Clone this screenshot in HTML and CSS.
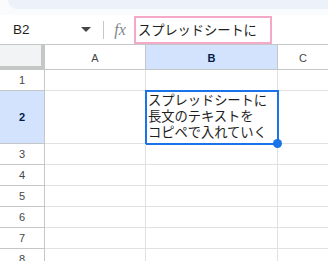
FILE: index.html
```html
<!DOCTYPE html>
<html lang="ja">
<head>
<meta charset="utf-8">
<link rel="stylesheet" href="styles.css">
</head>
<body>
<div class="top"><div class="toolbar"></div></div>
<div class="fbar">
  <div class="namebox">
    <span class="ref">B2</span>
    <svg class="caret" width="10" height="6" viewBox="0 0 10 6"><path d="M0 0 L10 0 L5 5 Z" fill="#444746"/></svg>
  </div>
  <div class="sep"></div>
  <div class="fx">fx</div>
  <div class="finput">スプレッドシートに</div>
</div>
<div class="grid">
  <div class="cell corner"></div>
  <div class="cell colh">A</div>
  <div class="cell colh sel">B</div>
  <div class="cell colh last">C</div>

  <div class="cell rowh">1</div><div class="cell"></div><div class="cell"></div><div class="cell last"></div>
  <div class="cell rowh sel">2</div><div class="cell"></div>
  <div class="cell active">
    <div class="text">スプレッドシートに<br>長文のテキストを<br>コピペで入れていく</div>
    <div class="selbox"></div>
  </div>
  <div class="cell last"></div>
  <div class="cell rowh">3</div><div class="cell"></div><div class="cell"><div class="handle"></div></div><div class="cell last"></div>
  <div class="cell rowh">4</div><div class="cell"></div><div class="cell"></div><div class="cell last"></div>
  <div class="cell rowh">5</div><div class="cell"></div><div class="cell"></div><div class="cell last"></div>
  <div class="cell rowh">6</div><div class="cell"></div><div class="cell"></div><div class="cell last"></div>
  <div class="cell rowh">7</div><div class="cell"></div><div class="cell"></div><div class="cell last"></div>
  <div class="cell rowh">8</div><div class="cell"></div><div class="cell"></div><div class="cell last"></div>
</div>
</body>
</html>
```
FILE: styles.css
```css
* { box-sizing: border-box; }
html, body { margin: 0; padding: 0; }
body {
  width: 328px;
  height: 261px;
  overflow: hidden;
  background: #ffffff;
  font-family: "Liberation Sans", Arial, "Noto Sans CJK JP", sans-serif;
}
.top {
  height: 15px;
  background: #f9fbfd;
  padding-left: 8px;
}
.toolbar {
  height: 9px;
  background: #edf2fa;
  border-bottom-left-radius: 14px;
}
.fbar {
  height: 29px;
  display: flex;
  align-items: center;
  background: #ffffff;
}
.namebox {
  width: 103px;
  display: flex;
  align-items: center;
  justify-content: space-between;
  padding: 0 12px 0 13px;
}
.ref {
  font-size: 13.5px;
  color: #1f1f1f;
}
.caret { margin-top: 1px; }
.sep {
  width: 1px;
  height: 18px;
  background: #c7c7c7;
}
.fx {
  width: 30px;
  text-align: center;
  font-family: "Liberation Serif", serif;
  font-style: italic;
  font-size: 16px;
  color: #80868b;
  padding-left: 2px;
}
.finput {
  width: 138px;
  height: 28px;
  border: 2px solid #f4a9c8;
  padding: 0 0 0 2px;
  display: flex;
  align-items: center;
  font-family: "Noto Sans CJK JP", sans-serif;
  font-size: 13.3px;
  color: #1f1f1f;
  letter-spacing: -0.1px;
}
.grid {
  display: grid;
  grid-template-columns: 45px 101px 132px 1fr;
  grid-template-rows: 26px 21px 53px repeat(6, 21px);
}
.cell {
  border-right: 1px solid #e1e1e1;
  border-bottom: 1px solid #e1e1e1;
  position: relative;
}
.cell.last { border-right: none; }
.corner {
  background: #f1f3f4;
  border-top: 1px solid #c4c7c5;
  border-right: 4px solid #c4c7c5;
  border-bottom: 4px solid #c4c7c5;
}
.colh {
  border-top: 1px solid #c4c7c5;
  border-right: 1px solid #c4c7c5;
  border-bottom: 1px solid #c4c7c5;
  display: flex;
  align-items: center;
  justify-content: center;
  font-size: 11px;
  color: #444746;
  background: #ffffff;
  padding-top: 1px;
}
.colh.last { border-right: none; }
.rowh {
  border-right: 1px solid #c4c7c5;
  border-bottom: 1px solid #c4c7c5;
  display: flex;
  align-items: center;
  justify-content: center;
  font-size: 11px;
  color: #444746;
  background: #ffffff;
}
.colh.sel, .rowh.sel {
  background: #d3e3fd;
  color: #041e49;
  font-weight: bold;
}
.text {
  padding: 1px 0 0 2px;
  font-family: "Noto Sans CJK JP", sans-serif;
  font-size: 13.33px;
  line-height: 16px;
  color: #1f1f1f;
  white-space: nowrap;
  letter-spacing: -0.1px;
}
.selbox {
  position: absolute;
  left: -1px;
  top: -1px;
  right: -2px;
  bottom: -2px;
  border: 2px solid #1a73e8;
}
.handle {
  position: absolute;
  z-index: 2;
  width: 9px;
  height: 9px;
  border-radius: 50%;
  background: #1a73e8;
  right: -5px;
  top: -5px;
}
```
